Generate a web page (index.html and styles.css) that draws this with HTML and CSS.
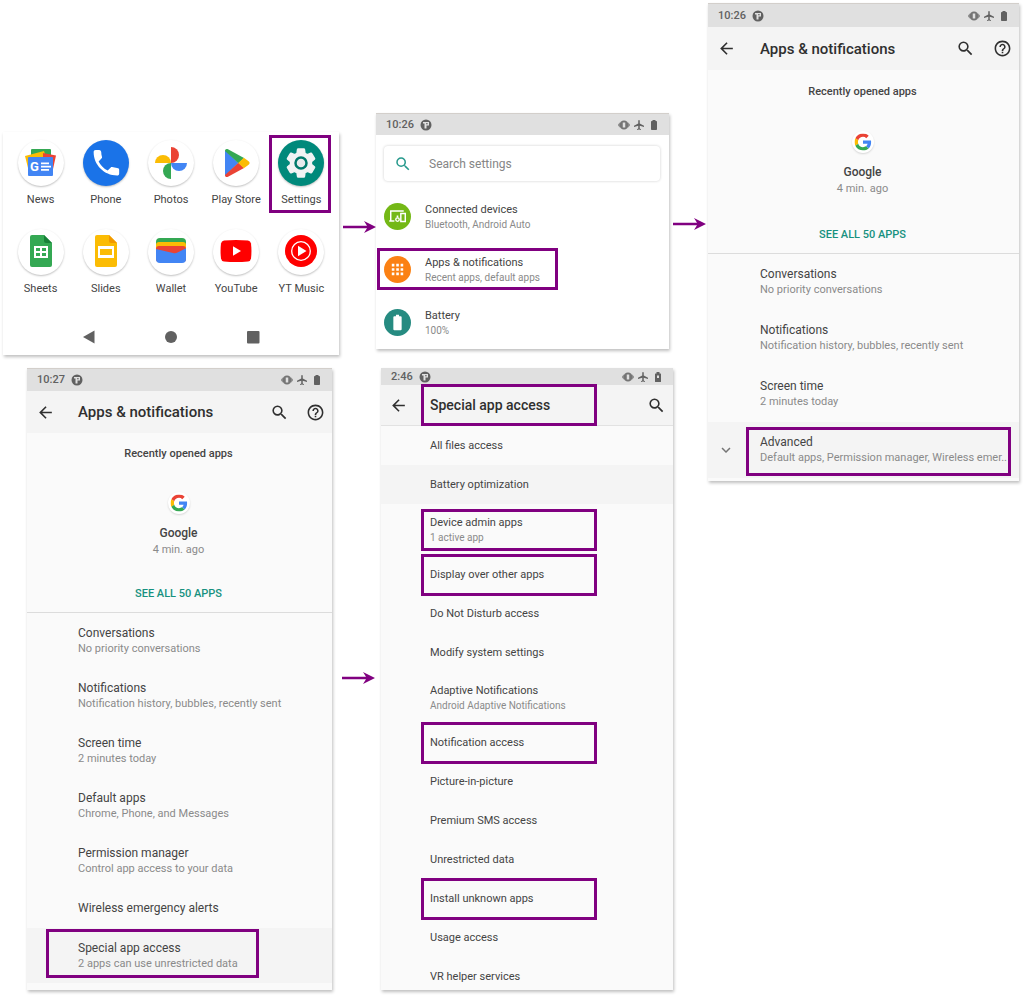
FILE: index.html
```html
<!DOCTYPE html>
<html lang="en">
<head>
    <meta charset="UTF-8">
    <meta name="viewport" content="width=device-width, initial-scale=1">
    <title>Special app access</title>
    <link rel="stylesheet" href="styles.css">
</head>
<body>
    <!-- shared icons -->
    <svg class="sprite" aria-hidden="true">
        <symbol id="back" viewBox="0 0 24 24"><path d="M20 11H7.83l5.59-5.59L12 4l-8 8 8 8 1.41-1.41L7.83 13H20v-2z"/></symbol>
        <symbol id="search" viewBox="0 0 24 24"><path d="M15.5 14h-.79l-.28-.27A6.47 6.47 0 0 0 16 9.5 6.5 6.5 0 1 0 9.5 16c1.61 0 3.09-.59 4.23-1.57l.27.28v.79l5 4.99L20.49 19l-4.99-5zm-6 0C7.01 14 5 11.99 5 9.5S7.01 5 9.5 5 14 7.01 14 9.5 11.99 14 9.5 14z"/></symbol>
        <symbol id="help" viewBox="0 0 24 24"><path d="M11 18h2v-2h-2v2zm1-16C6.48 2 2 6.48 2 12s4.48 10 10 10 10-4.48 10-10S17.52 2 12 2zm0 18c-4.41 0-8-3.59-8-8s3.59-8 8-8 8 3.59 8 8-3.59 8-8 8zm0-14c-2.21 0-4 1.79-4 4h2c0-1.1.9-2 2-2s2 .9 2 2c0 2-3 1.75-3 5h2c0-2.25 3-2.5 3-5 0-2.21-1.79-4-4-4z"/></symbol>
        <symbol id="chevron" viewBox="0 0 24 24"><path d="M16.59 8.59L12 13.17 7.41 8.59 6 10l6 6 6-6z"/></symbol>
        <symbol id="badge" viewBox="0 0 24 24"><circle cx="12" cy="12" r="11"/><path d="M6 6h12v7h-5v6H9V9H6z" fill="#e0e0e0"/><path d="M12 8.500h3.500v2H12z"/></symbol>
        <symbol id="vibrate" viewBox="0 0 24 24"><path d="M12 3a9 9 0 1 0 0 18 9 9 0 0 0 0-18zm-2.500 4h5v10h-5z" fill-rule="evenodd" opacity=".85"/><path d="M3.500 6.500L-.5 12l4 5.500zM20.500 6.500l4 5.500-4 5.500z" opacity=".7"/></symbol>
        <symbol id="plane" viewBox="0 0 24 24"><path d="M22 16v-2.500l-8.500-4.500V3.500C13.500 2.670 12.830 2 12 2s-1.500.67-1.500 1.500V9L2 13.500V16l8.500-2.500V19L8 20.500V22l4-1 4 1v-1.500L13.500 19v-5.500z"/></symbol>
        <symbol id="battery" viewBox="0 0 24 24"><path d="M16.500 4H15V2H9v2H7.500C6.700 4 6 4.600 6 5.330v15.330C6 21.400 6.700 22 7.500 22h9c.8 0 1.500-.6 1.500-1.330V5.330C18 4.600 17.300 4 16.500 4z"/></symbol>
        <symbol id="google" viewBox="0 0 48 48">
            <path fill="#ea4335" d="M24 9.500c3.540 0 6.710 1.220 9.210 3.600l6.850-6.850C35.900 2.380 30.470 0 24 0 14.620 0 6.510 5.380 2.560 13.220l7.980 6.190C12.430 13.720 17.740 9.500 24 9.500z"/>
            <path fill="#4285f4" d="M46.980 24.550c0-1.570-.15-3.090-.38-4.550H24v9.020h12.940c-.58 2.960-2.260 5.480-4.780 7.180l7.730 6c4.510-4.180 7.090-10.360 7.090-17.650z"/>
            <path fill="#fbbc05" d="M10.530 28.590c-.48-1.450-.76-2.990-.76-4.590s.27-3.140.76-4.590l-7.980-6.190C.92 16.460 0 20.120 0 24s.92 7.540 2.560 10.780l7.970-6.190z"/>
            <path fill="#34a853" d="M24 48c6.480 0 11.930-2.130 15.890-5.810l-7.730-6c-2.150 1.450-4.920 2.300-8.160 2.300-6.260 0-11.570-4.220-13.470-9.910l-7.980 6.190C6.510 42.620 14.620 48 24 48z"/>
        </symbol>
        <symbol id="arrow" viewBox="0 0 33 12"><path d="M0 4.700h24L21 0l12 6-12 6 3-4.700H0z"/></symbol>
    </svg>

    <main class="flow">
        <div class="left">
            <div class="steps steps-top">
                <!-- launcher -->
                <section class="screen launcher">
                    <div class="apps">
                        <a class="app" href="#">
                            <svg class="app-icon" viewBox="0 0 46 46">
                                <path fill="#34a853" d="M14 9h18a1 1 0 0 1 1 1v10H13V10a1 1 0 0 1 1-1z"/>
                                <path fill="#fbbc04" d="M7 16l19-5 3 9-19 8z"/>
                                <path fill="#ea4335" d="M25 13l13 2.500-4 18-9-10z"/>
                                <rect x="10" y="17" width="25" height="19" rx="1" fill="#4285f4"/>
                                <text x="12" y="31" class="news-g">G</text>
                                <path fill="#fff" d="M23 22.500h8v1.800h-8zM23 25.700h10v1.800H23zM23 28.900h8v1.800h-8z"/>
                            </svg>
                            <span>News</span>
                        </a>
                        <a class="app" href="#">
                            <svg class="app-icon blue" viewBox="0 0 46 46">
                                <path fill="#fff" transform="translate(6.500 6.500) scale(1.380)" d="M6.620 10.790c1.440 2.830 3.760 5.140 6.590 6.590l2.200-2.200c.27-.27.67-.36 1.020-.24 1.120.37 2.330.57 3.570.57 1 0 1.500.6 1.500 1.300V19.500c0 1-.6 1.500-1.500 1.500-9.390 0-17-7.610-17-17 0-.9.500-1.500 1.500-1.500h2.500c.8 0 1.300.5 1.500 1.500 0 1.250.2 2.450.57 3.570.11.35.03.74-.25 1.020l-2.200 2.200z"/>
                            </svg>
                            <span>Phone</span>
                        </a>
                        <a class="app" href="#">
                            <svg class="app-icon" viewBox="0 0 46 46">
                                <path fill="#ea4335" d="M23 7a8 8 0 0 1 8 8 8 8 0 0 1-8 8z"/>
                                <path fill="#4285f4" d="M39 23a8 8 0 0 1-16 0z"/>
                                <path fill="#34a853" d="M23 39a8 8 0 0 1 0-16z"/>
                                <path fill="#fbbc04" d="M7 23a8 8 0 0 1 16 0z"/>
                            </svg>
                            <span>Photos</span>
                        </a>
                        <a class="app" href="#">
                            <svg class="app-icon" viewBox="0 0 46 46">
                                <path fill="#4285f4" d="M12 10v26l13.500-13z"/>
                                <path fill="#34a853" d="M12 11c0-2 1.500-2.500 3-1.700L31 18l-5.500 5.200z"/>
                                <path fill="#ea4335" d="M12 35c0 2 1.500 2.500 3 1.700L31 28l-5.500-5.200z"/>
                                <path fill="#fbbc04" d="M25.200 23l5.600-5.200 4.500 3.200c1.800 1.100 1.800 2.900 0 4l-4.500 3.200z"/>
                            </svg>
                            <span>Play Store</span>
                        </a>
                        <a class="app" href="#">
                            <svg class="app-icon teal" viewBox="0 0 46 46">
                                <path fill="#f1f3f4" stroke="#f1f3f4" stroke-linejoin="round" transform="translate(6.200 6.200) scale(1.400)" d="M19.430 12.980c.04-.32.07-.64.07-.98s-.03-.66-.07-.98l2.110-1.650c.19-.15.24-.42.12-.64l-2-3.460c-.12-.22-.39-.3-.61-.22l-2.490 1c-.52-.4-1.080-.73-1.690-.98l-.38-2.650C14.460 2.180 14.250 2 14 2h-4c-.25 0-.46.18-.49.42l-.38 2.650c-.61.25-1.170.59-1.690.98l-2.490-1c-.23-.09-.49 0-.61.22l-2 3.460c-.13.22-.07.49.12.64l2.110 1.650c-.04.32-.07.65-.07.98s.03.66.07.98l-2.110 1.650c-.19.15-.24.42-.12.64l2 3.460c.12.22.39.3.61.22l2.490-1c.52.4 1.080.73 1.690.98l.38 2.650c.03.24.24.42.49.42h4c.25 0 .46-.18.49-.42l.38-2.650c.61-.25 1.170-.59 1.690-.98l2.490 1c.23.09.49 0 .61-.22l2-3.460c.12-.22.07-.49-.12-.64l-2.110-1.650z"/>
                                <circle cx="23" cy="23" r="5.500" fill="#e8eaed" stroke="#00796b" stroke-width="2.500"/>
                            </svg>
                            <span>Settings</span>
                            <i class="mark mark-app"></i>
                        </a>
                        <a class="app" href="#">
                            <svg class="app-icon" viewBox="0 0 46 46">
                                <path fill="#34a853" d="M14 6h12l8 8v22a2 2 0 0 1-2 2H14a2 2 0 0 1-2-2V8a2 2 0 0 1 2-2z"/>
                                <path fill="#188038" d="M26 6l8 8h-6a2 2 0 0 1-2-2z"/>
                                <path fill="#fff" fill-rule="evenodd" d="M16 17h14v12H16zm2 2v3h4v-3zm6 0v3h4v-3zm-6 5v3h4v-3zm6 0v3h4v-3z"/>
                            </svg>
                            <span>Sheets</span>
                        </a>
                        <a class="app" href="#">
                            <svg class="app-icon" viewBox="0 0 46 46">
                                <path fill="#fbbc04" d="M14 6h12l8 8v22a2 2 0 0 1-2 2H14a2 2 0 0 1-2-2V8a2 2 0 0 1 2-2z"/>
                                <path fill="#f29900" d="M26 6l8 8h-6a2 2 0 0 1-2-2z"/>
                                <path fill="#fff" fill-rule="evenodd" d="M15 17h16v12H15zm2 3v6h12v-6z"/>
                            </svg>
                            <span>Slides</span>
                        </a>
                        <a class="app" href="#">
                            <svg class="app-icon" viewBox="0 0 46 46">
                                <rect x="8" y="9" width="30" height="20" rx="4" fill="#34a853"/>
                                <rect x="8" y="13" width="30" height="18" rx="3" fill="#fbbc04"/>
                                <rect x="8" y="17" width="30" height="16" rx="3" fill="#ea4335"/>
                                <path fill="#4285f4" d="M8 20l17 4c2 .5 3 .3 5-.7l8-4V30a4 4 0 0 1-4 4H12a4 4 0 0 1-4-4z"/>
                            </svg>
                            <span>Wallet</span>
                        </a>
                        <a class="app" href="#">
                            <svg class="app-icon" viewBox="0 0 46 46">
                                <path fill="#f00" d="M11 11.500q12-1.200 24 0 2.500.3 3 3 .9 7.500 0 15-.5 2.700-3 3-12 1.200-24 0-2.500-.3-3-3-.9-7.500 0-15 .5-2.700 3-3z"/>
                                <path fill="#fff" d="M20 17.300v9.400l8-4.700z"/>
                            </svg>
                            <span>YouTube</span>
                        </a>
                        <a class="app" href="#">
                            <svg class="app-icon" viewBox="0 0 46 46">
                                <circle cx="23" cy="22" r="16" fill="#f00"/>
                                <circle cx="23" cy="22" r="9.300" fill="none" stroke="#fff" stroke-width="1.300"/>
                                <path fill="#fff" d="M20 16.800v10.400l8.500-5.200z"/>
                            </svg>
                            <span>YT Music</span>
                        </a>
                    </div>
                    <nav class="nav-keys">
                        <button type="button" aria-label="Back"><svg viewBox="0 0 14 14"><path d="M12.500.5v13L1 7z"/></svg></button>
                        <button type="button" aria-label="Home"><svg viewBox="0 0 14 14"><circle cx="7" cy="7" r="6"/></svg></button>
                        <button type="button" aria-label="Overview"><svg viewBox="0 0 14 14"><rect x="1" y="1" width="12.500" height="12.500" rx="1"/></svg></button>
                    </nav>
                </section>

                <svg class="arrow arrow-1"><use href="#arrow"/></svg>

                <!-- settings home -->
                <section class="screen home">
                    <div class="status">
                        <span>10:26</span>
                        <svg><use href="#badge"/></svg>
                        <svg class="push"><use href="#vibrate"/></svg>
                        <svg><use href="#plane"/></svg>
                        <svg><use href="#battery"/></svg>
                    </div>
                    <label class="searchbox">
                        <svg><use href="#search"/></svg>
                        <input type="search" placeholder="Search settings" aria-label="Search settings">
                    </label>
                    <a class="row" href="#">
                        <svg class="round green" viewBox="0 0 26 26">
                            <path fill="none" stroke="#fff" stroke-width="1.400" d="M19 7.700H6.500v9M5 17.300h5M16.200 10.200h4.300v7.600h-4.300z"/>
                            <circle cx="13" cy="16" r="1.700" fill="none" stroke="#fff" stroke-width="1.300"/>
                            <path fill="#fff" d="M12.200 12h1.600v2h-1.600z"/>
                        </svg>
                        <span class="text"><b>Connected devices</b><small>Bluetooth, Android Auto</small></span>
                    </a>
                    <a class="row" href="#">
                        <svg class="round orange" viewBox="0 0 26 26">
                            <path fill="#fff" d="M7.500 7.500H10V10H7.500zM11.800 7.500h2.500V10h-2.500zM16 7.500h2.500V10H16zM7.500 11.800H10v2.500H7.500zM11.800 11.800h2.500v2.500h-2.500zM16 11.800h2.500v2.500H16zM7.500 16H10v2.500H7.500zM11.800 16h2.500v2.500h-2.500zM16 16h2.500v2.500H16z"/>
                        </svg>
                        <span class="text"><b>Apps &amp; notifications</b><small>Recent apps, default apps</small></span>
                        <i class="mark mark-home"></i>
                    </a>
                    <a class="row" href="#">
                        <svg class="round dark-teal" viewBox="0 0 26 26">
                            <path fill="#fff" d="M11.500 5.500h3V7H16q1 0 1 1v11.500q0 1-1 1h-6q-1 0-1-1V8q0-1 1-1h1.500z"/>
                        </svg>
                        <span class="text"><b>Battery</b><small>100%</small></span>
                    </a>
                </section>
            </div>

            <div class="steps steps-bottom">
                <!-- apps & notifications, expanded -->
                <section class="screen apps-page compact">
                    <div class="status">
                        <span>10:27</span>
                        <svg><use href="#badge"/></svg>
                        <svg class="push"><use href="#vibrate"/></svg>
                        <svg><use href="#plane"/></svg>
                        <svg><use href="#battery"/></svg>
                    </div>
                    <header class="toolbar">
                        <button type="button" aria-label="Navigate up"><svg><use href="#back"/></svg></button>
                        <h2>Apps &amp; notifications</h2>
                        <button type="button" aria-label="Search"><svg><use href="#search"/></svg></button>
                        <button type="button" aria-label="Help"><svg><use href="#help"/></svg></button>
                    </header>
                    <div class="recent">
                        <h3>Recently opened apps</h3>
                        <svg class="recent-icon" viewBox="-7 -7 62 62"><use href="#google" width="48" height="48"/></svg>
                        <b>Google</b>
                        <small>4 min. ago</small>
                        <a href="#">SEE ALL 50 APPS</a>
                    </div>
                    <a class="row" href="#"><span class="text"><b>Conversations</b><small>No priority conversations</small></span></a>
                    <a class="row" href="#"><span class="text"><b>Notifications</b><small>Notification history, bubbles, recently sent</small></span></a>
                    <a class="row" href="#"><span class="text"><b>Screen time</b><small>2 minutes today</small></span></a>
                    <a class="row" href="#"><span class="text"><b>Default apps</b><small>Chrome, Phone, and Messages</small></span></a>
                    <a class="row" href="#"><span class="text"><b>Permission manager</b><small>Control app access to your data</small></span></a>
                    <a class="row single" href="#"><span class="text"><b>Wireless emergency alerts</b></span></a>
                    <a class="row shaded" href="#">
                        <span class="text"><b>Special app access</b><small>2 apps can use unrestricted data</small></span>
                        <i class="mark mark-special"></i>
                    </a>
                </section>

                <svg class="arrow arrow-2"><use href="#arrow"/></svg>

                <!-- special app access -->
                <section class="screen special">
                    <div class="status">
                        <span>2:46</span>
                        <svg><use href="#badge"/></svg>
                        <svg class="push"><use href="#vibrate"/></svg>
                        <svg><use href="#plane"/></svg>
                        <svg viewBox="0 0 24 24"><path fill-rule="evenodd" d="M9 2h6v3h2q1 0 1 1v15q0 1-1 1H7q-1 0-1-1V6q0-1 1-1h2zm1 7v5h4V9z"/></svg>
                    </div>
                    <header class="toolbar">
                        <button type="button" aria-label="Navigate up"><svg><use href="#back"/></svg></button>
                        <h2>Special app access</h2>
                        <button type="button" aria-label="Search"><svg><use href="#search"/></svg></button>
                        <i class="mark mark-access"></i>
                    </header>
                    <div class="list">
                        <a class="row single" href="#"><span class="text"><b>All files access</b></span></a>
                        <a class="row single shaded" href="#"><span class="text"><b>Battery optimization</b></span></a>
                        <a class="row" href="#"><span class="text"><b>Device admin apps</b><small>1 active app</small></span><i class="mark mark-access"></i></a>
                        <a class="row single" href="#"><span class="text"><b>Display over other apps</b></span><i class="mark mark-access"></i></a>
                        <a class="row single" href="#"><span class="text"><b>Do Not Disturb access</b></span></a>
                        <a class="row single" href="#"><span class="text"><b>Modify system settings</b></span></a>
                        <a class="row" href="#"><span class="text"><b>Adaptive Notifications</b><small>Android Adaptive Notifications</small></span></a>
                        <a class="row single" href="#"><span class="text"><b>Notification access</b></span><i class="mark mark-access"></i></a>
                        <a class="row single" href="#"><span class="text"><b>Picture-in-picture</b></span></a>
                        <a class="row single" href="#"><span class="text"><b>Premium SMS access</b></span></a>
                        <a class="row single" href="#"><span class="text"><b>Unrestricted data</b></span></a>
                        <a class="row single" href="#"><span class="text"><b>Install unknown apps</b></span><i class="mark mark-access"></i></a>
                        <a class="row single" href="#"><span class="text"><b>Usage access</b></span></a>
                        <a class="row single" href="#"><span class="text"><b>VR helper services</b></span></a>
                    </div>
                </section>
            </div>
        </div>

        <svg class="arrow arrow-3"><use href="#arrow"/></svg>

        <!-- apps & notifications -->
        <section class="screen apps-page">
            <div class="status">
                <span>10:26</span>
                <svg><use href="#badge"/></svg>
                <svg class="push"><use href="#vibrate"/></svg>
                <svg><use href="#plane"/></svg>
                <svg><use href="#battery"/></svg>
            </div>
            <header class="toolbar">
                <button type="button" aria-label="Navigate up"><svg><use href="#back"/></svg></button>
                <h2>Apps &amp; notifications</h2>
                <button type="button" aria-label="Search"><svg><use href="#search"/></svg></button>
                <button type="button" aria-label="Help"><svg><use href="#help"/></svg></button>
            </header>
            <div class="recent">
                <h3>Recently opened apps</h3>
                <svg class="recent-icon" viewBox="-7 -7 62 62"><use href="#google" width="48" height="48"/></svg>
                <b>Google</b>
                <small>4 min. ago</small>
                <a href="#">SEE ALL 50 APPS</a>
            </div>
            <a class="row" href="#"><span class="text"><b>Conversations</b><small>No priority conversations</small></span></a>
            <a class="row" href="#"><span class="text"><b>Notifications</b><small>Notification history, bubbles, recently sent</small></span></a>
            <a class="row" href="#"><span class="text"><b>Screen time</b><small>2 minutes today</small></span></a>
            <a class="row shaded" href="#">
                <svg class="chevron"><use href="#chevron"/></svg>
                <span class="text"><b>Advanced</b><small>Default apps, Permission manager, Wireless emer..</small></span>
                <i class="mark mark-advanced"></i>
            </a>
        </section>
    </main>
</body>
</html>
```
FILE: styles.css
```css
* {
    box-sizing: border-box;
}
body {
    margin: 0;
    background: #fff;
    color: #444;
    font-family: Roboto, "Liberation Sans", sans-serif;
    font-size: 12px;
    line-height: 16px;
}
a {
    color: inherit;
    text-decoration: none;
}
button {
    display: flex;
    padding: 0;
    border: 0;
    background: none;
    color: inherit;
    cursor: pointer;
}
svg {
    flex: none;
    fill: currentColor;
}
.sprite {
    position: absolute;
    width: 0;
    height: 0;
}

/* overall layout */
.flow {
    display: grid;
    grid-template-columns: 670fr 35px 311fr;
    align-items: start;
    padding: 3px 5px 5px 3px;
}
.steps {
    display: grid;
    align-items: start;
}
.steps-top {
    grid-template-columns: 336fr 37px 293fr;
    padding: 110px 4px 13px 0;
}
.steps-bottom {
    grid-template-columns: 305fr 49px 292fr;
    padding-left: 24px;
}
.screen {
    min-width: 0;
    background: #fafafa;
    box-shadow: 1px 2px 3px rgba(0, 0, 0, 0.25);
}
.arrow {
    width: 33px;
    height: 12px;
    color: #800080;
}
.arrow-1 {
    margin: 108px 0 0 4px;
}
.arrow-2 {
    margin: 304px 0 0 10px;
}
.arrow-3 {
    margin-top: 215px;
}

/* purple boxes over the content */
.mark {
    position: absolute;
    border: 3px solid #800080;
    pointer-events: none;
}
.mark-app {
    inset: -5px 3px -5px 0;
}
.mark-home {
    top: 5px;
    left: 1px;
    width: 181px;
    height: 42px;
}
.mark-special {
    top: 1px;
    left: 19px;
    width: 213px;
    height: 49px;
}
.mark-advanced {
    inset: 5px 8px 2px 38px;
}
.mark-access {
    top: 50%;
    left: 40px;
    width: 176px;
    height: 42px;
    transform: translateY(-50%);
}

/* launcher */
.launcher {
    margin-top: 19px;
    padding: 8px 5px 10px;
    background: #fff;
}
.apps {
    display: grid;
    grid-template-columns: repeat(5, 1fr);
    row-gap: 21px;
}
.app {
    position: relative;
    display: flex;
    flex-direction: column;
    align-items: center;
    gap: 6px;
    font-size: 11px;
    white-space: nowrap;
}
.app-icon {
    width: 46px;
    height: 46px;
    border-radius: 50%;
    background: #fff;
    box-shadow: 0 1px 2px rgba(0, 0, 0, 0.25);
}
.app-icon.blue {
    background: #1a73e8;
}
.app-icon.teal {
    background: #00897b;
}
.news-g {
    fill: #fff;
    font-size: 13px;
    font-weight: 700;
}
.nav-keys {
    display: flex;
    justify-content: center;
    gap: 68px;
    margin-top: 32px;
    padding: 1px 0;
    color: #616161;
}
.nav-keys svg {
    width: 14px;
    height: 14px;
}

/* status bar */
.status {
    display: flex;
    align-items: center;
    gap: 3px;
    height: 24px;
    padding: 0 9px 0 10px;
    border-top: 1px solid #d3cfcb;
    background: #e0e0e0;
    color: #616161;
    font-size: 11px;
    font-weight: 500;
}
.status svg {
    width: 12px;
    height: 12px;
}
.status span {
    margin-right: 3px;
}
.status .push {
    margin-left: auto;
    overflow: visible;
}

/* toolbar */
.toolbar {
    position: relative;
    display: flex;
    align-items: center;
    gap: 18px;
    height: 43px;
    padding: 0 7px 0 9px;
    background: #f4f4f4;
    color: #2f2f2f;
}
.toolbar svg {
    width: 19px;
    height: 19px;
}
.toolbar h2 {
    flex: 1;
    margin: 0 0 0 6px;
    font-size: 15px;
    font-weight: 500;
    white-space: nowrap;
}

/* rows */
.row {
    position: relative;
    display: flex;
    align-items: center;
    height: 56px;
    padding-left: 52px;
}
.text {
    display: flex;
    flex-direction: column;
    min-width: 0;
    white-space: nowrap;
}
.text b {
    font-weight: 400;
}
small {
    color: #8a8a8a;
    font-size: 11px;
}
.shaded {
    background: #f4f4f4;
}
.chevron {
    width: 18px;
    height: 18px;
    margin: 0 25px 0 -43px;
    color: #757575;
}

/* settings home */
.home {
    background: #fff;
}
.home .status {
    height: 22px;
}
.searchbox {
    display: flex;
    align-items: center;
    gap: 17px;
    height: 35px;
    margin: 11px 9px 9px 8px;
    padding-left: 10px;
    border-radius: 4px;
    box-shadow: 0 0 3px rgba(0, 0, 0, 0.2);
}
.searchbox svg {
    width: 18px;
    height: 18px;
    color: #26998c;
}
.searchbox input {
    flex: 1;
    min-width: 0;
    padding: 0;
    border: 0;
    outline: 0;
    background: none;
    font: inherit;
}
.searchbox input::placeholder {
    color: #858585;
    opacity: 1;
}
.home .row {
    gap: 14px;
    height: 53px;
    padding-left: 8px;
}
.home .text,
.special .text {
    font-size: 11px;
    line-height: 15px;
}
.home small,
.special small {
    font-size: 10px;
}
.round {
    width: 27px;
    height: 27px;
    border-radius: 50%;
}
.green {
    background: #74b816;
}
.orange {
    background: #fb8114;
}
.dark-teal {
    background: #268b81;
}

/* apps & notifications */
.apps-page {
    padding-bottom: 3px;
}
.recent {
    display: flex;
    flex-direction: column;
    align-items: center;
    padding: 14px 2px 10px 0;
    border-bottom: 1px solid #dcdcdc;
}
.recent h3 {
    margin: 0;
    font-size: 11px;
    font-weight: 500;
}
.recent-icon {
    width: 22px;
    height: 22px;
    margin: 31px 0 11px;
    border-radius: 50%;
    background: #fff;
    box-shadow: 0 1px 2px rgba(0, 0, 0, 0.15);
}
.recent b {
    font-weight: 500;
}
.recent small {
    margin-top: 1px;
}
.recent a {
    margin-top: 30px;
    color: #16917f;
    font-size: 11px;
    font-weight: 500;
}
.compact {
    padding-bottom: 7px;
}
.compact .status {
    height: 23px;
}
.compact .toolbar {
    height: 42px;
    gap: 17px;
}
.compact .recent {
    padding-top: 13px;
}
.compact .recent-icon {
    margin-top: 30px;
}
.compact .recent a {
    margin-top: 28px;
}
.compact .row {
    height: 55px;
    padding-left: 51px;
}
.compact .single {
    height: 40px;
}

/* special app access */
.special {
    overflow: hidden;
}
.special .status {
    height: 17px;
    border-top: 0;
}
.special .toolbar {
    height: 41px;
    padding-left: 8px;
    border-bottom: 1px solid #e2e2e2;
}
.special .toolbar h2 {
    margin-left: 4px;
    font-size: 14px;
}
.special .list {
    margin-bottom: -6px;
}
.special .row {
    height: 51px;
    padding-left: 49px;
}
.special .single {
    height: 39px;
}
```
